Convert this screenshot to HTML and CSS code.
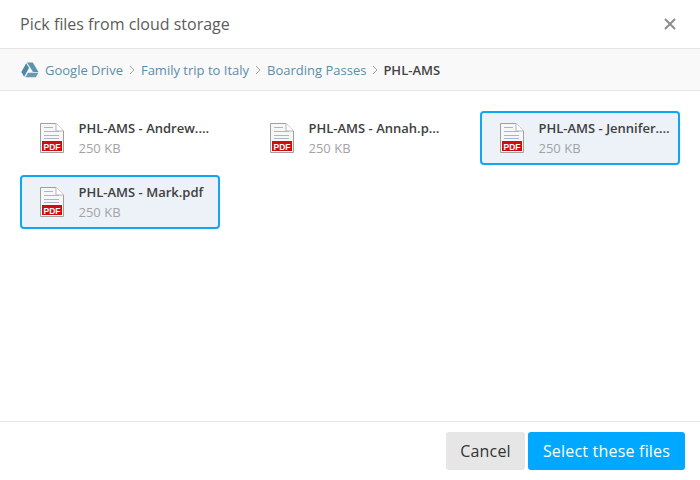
FILE: index.html
```html
<!DOCTYPE html>
<html lang="en">
<head>
<meta charset="utf-8">
<title>Pick files</title>
<link rel="stylesheet" href="styles.css">
</head>
<body>
<svg class="defs" width="0" height="0" aria-hidden="true">
  <symbol id="pdf" viewBox="0 0 24 30">
    <path d="M.5.5H16L23.500 8V29.500H.5Z" fill="#f7f7f7" stroke="#a0a0a0"/>
    <path d="M16 .5V8H23.500" fill="#fff" stroke="#b5b5b5"/>
    <path d="M4 4.500H13M4 8.500H19M4 12.500H19M4 15.500H19" stroke="#a8b6c6" fill="none"/>
    <rect x="2" y="18" width="20" height="10" fill="#d00c0c"/>
    <text x="12" y="26.500" class="pdf-label" text-anchor="middle">PDF</text>
  </symbol>
</svg>
<main class="dialog">
  <header class="head">
    <h1 class="title">Pick files from cloud storage</h1>
    <svg class="close" width="12" height="12" viewBox="0 0 12 12"><path d="M1 1L11 11M11 1L1 11" stroke="#8c8c8c" stroke-width="2" fill="none"/></svg>
  </header>
  <nav class="crumbs">
    <svg class="drive" width="18" height="16" viewBox="0 0 18 16"><path d="M6 .5H11.800L17.500 10H12L6 .5Z" fill="#5d93ae"/><path d="M5.200 1.300L8.100 6L3.100 14.800L.3 10Z" fill="#4f88a6"/><path d="M4.300 15.300L7 10.800H17.500L14.800 15.300Z" fill="#6a9ab3"/></svg>
    <a class="crumb">Google Drive</a>
    <svg class="chev" width="6" height="10" viewBox="0 0 6 10"><path d="M1 1L5 5L1 9" stroke="#a5a5a5" fill="none"/></svg>
    <a class="crumb">Family trip to Italy</a>
    <svg class="chev" width="6" height="10" viewBox="0 0 6 10"><path d="M1 1L5 5L1 9" stroke="#a5a5a5" fill="none"/></svg>
    <a class="crumb">Boarding Passes</a>
    <svg class="chev chev-last" width="6" height="10" viewBox="0 0 6 10"><path d="M1 1L5 5L1 9" stroke="#a5a5a5" fill="none"/></svg>
    <span class="crumb-current">PHL-AMS</span>
  </nav>
  <section class="files">
    <div class="file">
      <svg class="file-icon"><use href="#pdf"/></svg>
      <div class="file-text"><div class="file-name">PHL-AMS - Andrew.pdf</div><div class="file-size">250 KB</div></div>
    </div>
    <div class="file">
      <svg class="file-icon"><use href="#pdf"/></svg>
      <div class="file-text"><div class="file-name">PHL-AMS - Annah.pdf</div><div class="file-size">250 KB</div></div>
    </div>
    <div class="file selected">
      <svg class="file-icon"><use href="#pdf"/></svg>
      <div class="file-text"><div class="file-name">PHL-AMS - Jennifer.pdf</div><div class="file-size">250 KB</div></div>
    </div>
    <div class="file selected">
      <svg class="file-icon"><use href="#pdf"/></svg>
      <div class="file-text"><div class="file-name">PHL-AMS - Mark.pdf</div><div class="file-size">250 KB</div></div>
    </div>
  </section>
  <footer class="foot">
    <button class="btn btn-cancel">Cancel</button>
    <button class="btn btn-primary">Select these files</button>
  </footer>
</main>
</body>
</html>
```
FILE: styles.css
```css
* { box-sizing: border-box; }
html, body { margin: 0; height: 100%; }
body { background: #fff; font-family: "Open Sans", sans-serif; color: #333; }
.defs { position: absolute; }
.dialog { display: flex; flex-direction: column; height: 480px; }
.head { height: 49px; display: flex; align-items: center; justify-content: space-between; padding: 0 24px 0 20px; border-bottom: 1px solid #e6e6e6; }
.title { margin: 0; font-size: 16px; font-weight: 400; color: #5c5c5c; }
.crumbs { height: 42px; display: flex; align-items: center; padding: 0 20px 0 21px; background: #f9f9f9; border-bottom: 1px solid #e6e6e6; font-size: 13px; }
.drive { margin-right: 6px; }
.crumb { color: #5b8eaa; }
.chev { margin: 0 6px; }
.chev-last { margin-right: 5px; }
.crumb-current { font-weight: 600; color: #444; }
.files { flex: 1; display: grid; grid-template-columns: repeat(3, 200px); grid-auto-rows: 54px; column-gap: 30px; row-gap: 10px; padding: 20px 20px 0; align-content: start; }
.file { display: flex; align-items: center; padding: 0 8px 0 20px; border: 2px solid transparent; border-radius: 4px; }
.file.selected { border-color: #0fa7f5; background: #ecf2f8; }
.file-icon { width: 24px; height: 30px; margin-left: -2px; margin-right: 14.5px; flex: none; }
.pdf-label { font-family: "Liberation Sans", sans-serif; font-size: 8.5px; font-weight: 700; fill: #fff; }
.file-text { min-width: 0; flex: 1; }
.file-name { font-size: 13px; font-weight: 600; line-height: 18px; color: #404040; white-space: nowrap; overflow: hidden; text-overflow: ellipsis; }
.file-size { font-size: 13px; line-height: 18px; margin-top: 2px; margin-bottom: 1px; color: #a3a3a3; }
.foot { height: 59px; display: flex; justify-content: flex-end; gap: 3px; padding: 10px 15px 0 0; border-top: 1px solid #e6e6e6; }
.btn { height: 38px; border: 0; border-radius: 3px; font-family: inherit; font-size: 16px; letter-spacing: .2px; font-weight: 500; padding: 0; }
.btn-cancel { width: 79px; background: #e6e6e6; color: #333; }
.btn-primary { width: 157px; background: #00a9ff; color: #fff; }
```
